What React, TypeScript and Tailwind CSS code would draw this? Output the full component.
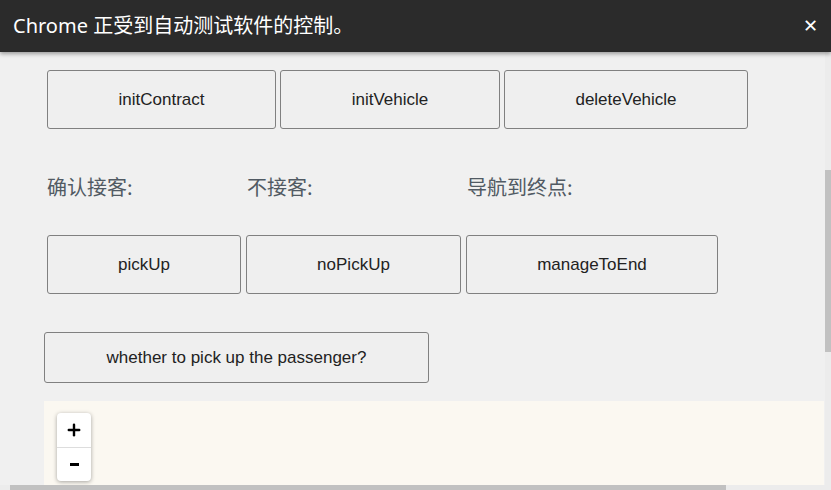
import { Plus } from 'lucide-react'

const sans = "font-['Liberation_Sans',Arial,sans-serif]"

function Btn({ label, w, h = 'h-[59px]' }: { label: string; w: string; h?: string }) {
  return (
    <button
      className={`${w} ${h} ${sans} shrink-0 rounded-[3px] border border-[#808080] bg-[#efefef] text-[17px] text-[#222]`}
    >
      {label}
    </button>
  )
}

function App() {
  return (
    <main className="relative h-[490px] w-[831px] overflow-hidden bg-[#f0f0f0]">
      <header className="relative z-10 flex h-[52px] items-center justify-between bg-[#2b2b2b] pl-[13px] pr-[13px] shadow-[0_2px_4px_rgba(0,0,0,0.35)]">
        <span className="font-['Noto_Sans','Noto_Sans_CJK_SC',sans-serif] text-[20px] leading-none text-white">
          Chrome 正受到自动测试软件的控制。
        </span>
        <span className="font-['DejaVu_Sans',sans-serif] text-[18px] font-bold leading-none text-white">✕</span>
      </header>

      <div className="flex flex-col pl-[44px] pt-[18px]">
        <div className="ml-[3px] flex gap-[4px]">
          <Btn label="initContract" w="w-[229px]" />
          <Btn label="initVehicle" w="w-[220px]" />
          <Btn label="deleteVehicle" w="w-[244px]" />
        </div>

        <div className="ml-[3px] mt-[44px] flex h-[28px] items-center font-['Noto_Sans_CJK_SC',sans-serif] text-[20px] text-[#515a63]">
          <span className="w-[200px]">确认接客:</span>
          <span className="w-[220px]">不接客:</span>
          <span>导航到终点:</span>
        </div>

        <div className="ml-[3px] mt-[34px] flex gap-[5px]">
          <Btn label="pickUp" w="w-[194px]" />
          <Btn label="noPickUp" w="w-[215px]" />
          <Btn label="manageToEnd" w="w-[252px]" />
        </div>

        <div className="mt-[38px]">
          <Btn label="whether to pick up the passenger?" w="w-[385px]" h="h-[51px]" />
        </div>

        <div className="mt-[18px] h-[100px] w-[780px] bg-[#fbf8f1] pl-[13px] pt-[12px]">
          <div className="flex w-[34px] flex-col rounded-[4px] bg-white shadow-[0_1px_4px_rgba(0,0,0,0.35)]">
            <div className="flex h-[35px] items-center justify-center border-b border-[#dddddd]">
              <Plus size={18} strokeWidth={3.2} className="text-black" />
            </div>
            <div className="flex h-[33px] items-center justify-center">
              <span className="h-[3px] w-[9px] bg-black" />
            </div>
          </div>
        </div>
      </div>

      {/* scrollbars */}
      <div className="absolute right-0 top-[52px] h-[433px] w-[6px] bg-[#ececec]">
        <div className="mt-[118px] h-[182px] w-full bg-[#c1c1c1]" />
      </div>
      <div className="absolute bottom-0 left-0 h-[5px] w-[831px] bg-[#ececec]">
        <div className="ml-[10px] h-full w-[716px] bg-[#c1c1c1]" />
      </div>
    </main>
  )
}

export default App
